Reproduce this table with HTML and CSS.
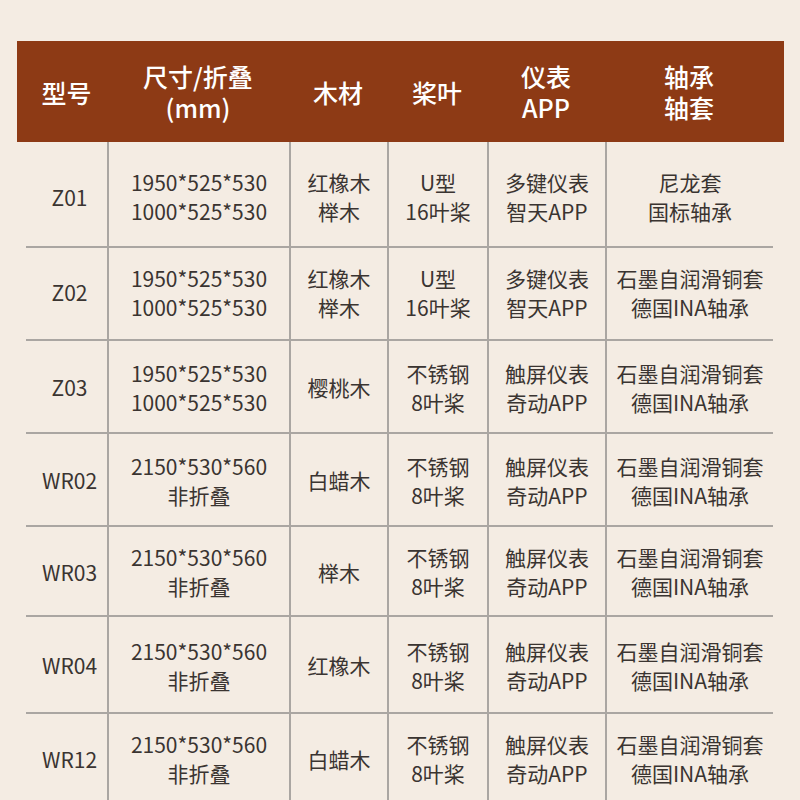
FILE: index.html
```html
<!DOCTYPE html>
<html lang="zh-CN">
<head>
<meta charset="utf-8">
<title>型号参数表</title>
<link rel="stylesheet" href="styles.css">
</head>
<body>
<div class="table">
  <div class="head">
    <div class="hc">型号</div>
    <div class="hc"><span class="hl">尺寸/折叠</span><span class="hl">(mm)</span></div>
    <div class="hc">木材</div>
    <div class="hc">桨叶</div>
    <div class="hc"><span class="hl">仪表</span><span class="hl">APP</span></div>
    <div class="hc"><span class="hl">轴承</span><span class="hl">轴套</span></div>
  </div>

  <div class="row r1">
    <div class="c c1">Z01</div>
    <div class="c">1950*525*530<br>1000*525*530</div>
    <div class="c">红橡木<br>榉木</div>
    <div class="c">U型<br>16叶桨</div>
    <div class="c">多键仪表<br>智天APP</div>
    <div class="c">尼龙套<br>国标轴承</div>
  </div>

  <div class="row r2">
    <div class="c c1">Z02</div>
    <div class="c">1950*525*530<br>1000*525*530</div>
    <div class="c">红橡木<br>榉木</div>
    <div class="c">U型<br>16叶桨</div>
    <div class="c">多键仪表<br>智天APP</div>
    <div class="c">石墨自润滑铜套<br>德国INA轴承</div>
  </div>

  <div class="row r3">
    <div class="c c1">Z03</div>
    <div class="c">1950*525*530<br>1000*525*530</div>
    <div class="c">樱桃木</div>
    <div class="c">不锈钢<br>8叶桨</div>
    <div class="c">触屏仪表<br>奇动APP</div>
    <div class="c">石墨自润滑铜套<br>德国INA轴承</div>
  </div>

  <div class="row r4">
    <div class="c c1">WR02</div>
    <div class="c">2150*530*560<br>非折叠</div>
    <div class="c">白蜡木</div>
    <div class="c">不锈钢<br>8叶桨</div>
    <div class="c">触屏仪表<br>奇动APP</div>
    <div class="c">石墨自润滑铜套<br>德国INA轴承</div>
  </div>

  <div class="row r5">
    <div class="c c1">WR03</div>
    <div class="c">2150*530*560<br>非折叠</div>
    <div class="c">榉木</div>
    <div class="c">不锈钢<br>8叶桨</div>
    <div class="c">触屏仪表<br>奇动APP</div>
    <div class="c">石墨自润滑铜套<br>德国INA轴承</div>
  </div>

  <div class="row r6">
    <div class="c c1">WR04</div>
    <div class="c">2150*530*560<br>非折叠</div>
    <div class="c">红橡木</div>
    <div class="c">不锈钢<br>8叶桨</div>
    <div class="c">触屏仪表<br>奇动APP</div>
    <div class="c">石墨自润滑铜套<br>德国INA轴承</div>
  </div>

  <div class="row r7">
    <div class="c c1">WR12</div>
    <div class="c">2150*530*560<br>非折叠</div>
    <div class="c">白蜡木</div>
    <div class="c">不锈钢<br>8叶桨</div>
    <div class="c">触屏仪表<br>奇动APP</div>
    <div class="c">石墨自润滑铜套<br>德国INA轴承</div>
  </div>
</div>
</body>
</html>
```
FILE: styles.css
```css
html, body {
  margin: 0;
  padding: 0;
  background: #f4ece3;
  height: 800px;
  overflow: hidden;
}

body {
  font-family: "Noto Sans CJK SC", "Noto Sans", sans-serif;
  color: #3a3431;
}

.table {
  margin: 41px 0 0 17px;
  width: 767px;
}

.head,
.row {
  display: grid;
  grid-template-columns: 81px 182px 98px 100px 118px 168px;
  padding: 0 11px 0 9px;
}

.head {
  height: 101px;
  background: #8d3a15;
  color: #ffffff;
  align-items: center;
}

.hc {
  display: flex;
  flex-direction: column;
  align-items: center;
  text-align: center;
  font-size: 25px;
  font-weight: 500;
  line-height: 30px;
}

.hl {
  display: block;
  height: 31px;
  line-height: 31px;
}

.row {
  background-image: linear-gradient(#aaa6a2, #aaa6a2);
  background-repeat: no-repeat;
  background-size: 747px 2px;
  background-position: 9px 100%;
}

.r1 { height: 106px; }
.r2 { height: 93px; }
.r3 { height: 93px; }
.r4 { height: 93px; }
.r5 { height: 90px; }
.r6 { height: 97px; }
.r7 { height: 90px; background-image: none; }

.c {
  display: flex;
  align-items: center;
  justify-content: center;
  text-align: center;
  font-size: 21px;
  line-height: 29px;
  border-left: 2px solid #aaa6a2;
  box-sizing: border-box;
}

.r1 .c { padding-top: 4px; }
.r2 .c { padding-bottom: 4px; }

.c1 {
  border-left: none;
  padding-left: 6px;
}
```
